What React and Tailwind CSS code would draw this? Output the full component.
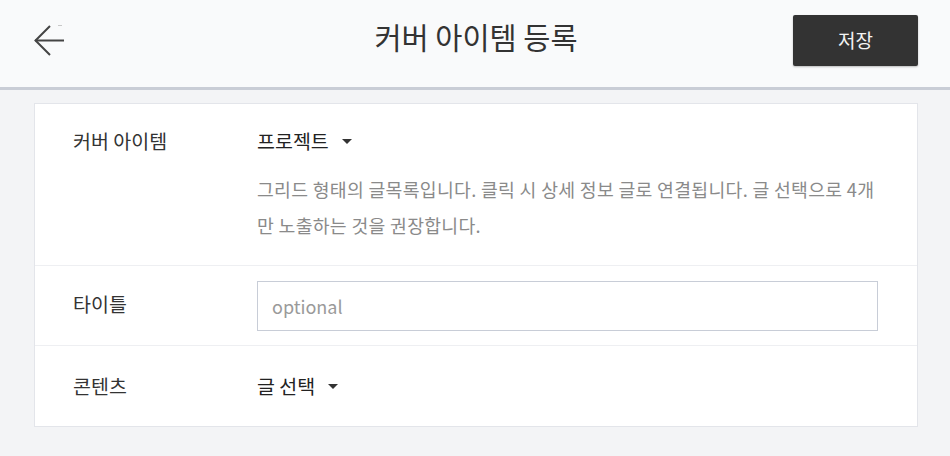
export default function App() {
  const font = { fontFamily: '"Noto Sans CJK KR", "Noto Sans", sans-serif' };
  return (
    <div className="min-h-[456px] w-full bg-[#f3f4f6]" style={font}>
      <header className="grid h-[90px] grid-cols-[1fr_auto_1fr] items-start border-b-[3px] border-[#c9cdd6] bg-[#f9fafb] pl-[34px] pr-[32px] pt-[15px]">
        <div className="relative mt-[10px] h-[31px] w-[31px]">
          <svg width="31" height="31" viewBox="0 0 31 31" fill="none">
            <path d="M1 15.5 H30" stroke="#444" strokeWidth="2" />
            <path d="M16 1 L1.5 15.5 L16 30" stroke="#444" strokeWidth="2" fill="none" />
          </svg>
          <span className="absolute left-[24px] top-0 h-px w-[4px] bg-[#c8c8c8]" />
        </div>
        <h1 className="mt-[1px] text-[29.5px] leading-[40px] text-[#333]">커버 아이템 등록</h1>
        <div className="flex justify-end">
          <button className="flex h-[51px] w-[125px] items-center justify-center rounded-[2px] bg-[#333333] text-[19px] text-[#f3f3f3] shadow-[0_1px_2px_rgba(0,0,0,0.25)]">
            저장
          </button>
        </div>
      </header>
      <main className="pl-[34px] pr-[32px] pt-[13px]">
        <div className="border border-[#e3e5ea] bg-white">
          <div className="flex border-b border-[#eeeff2] pb-[22px] pt-[20px]">
            <div className="w-[222px] shrink-0 pl-[38px] text-[19.5px] leading-[34px] text-[#333]">커버 아이템</div>
            <div className="w-[622px]">
              <div className="flex items-center text-[19.5px] leading-[34px] text-[#222]">
                프로젝트
                <Caret />
              </div>
              <p className="mt-[14px] text-[18.3px] leading-[35.5px] tracking-[0.3px] text-[#8a8a8a]">
                그리드 형태의 글목록입니다. 클릭 시 상세 정보 글로 연결됩니다. 글 선택으로 4개 만 노출하는 것을 권장합니다.
              </p>
            </div>
          </div>
          <div className="flex items-center border-b border-[#eeeff2] pb-[14px] pt-[15px]">
            <div className="-mt-[4px] w-[222px] shrink-0 pl-[38px] text-[19.5px] leading-[34px] text-[#333]">타이틀</div>
            <input
              className="h-[50px] w-[621px] border border-[#c8cdd7] px-[14px] text-[18px] text-[#333] outline-none placeholder:text-[#9a9a9a]"
              placeholder="optional"
            />
          </div>
          <div className="flex h-[80px] items-center">
            <div className="w-[222px] shrink-0 pl-[38px] text-[19.5px] leading-[34px] text-[#333]">콘텐츠</div>
            <div className="flex items-center text-[19.5px] leading-[34px] text-[#222]">
              글 선택
              <Caret />
            </div>
          </div>
        </div>
      </main>
    </div>
  );
}

function Caret() {
  return (
    <svg className="ml-[13px]" width="10" height="5" viewBox="0 0 10 5">
      <path d="M0 0 H10 L5 5 Z" fill="#333" />
    </svg>
  );
}
